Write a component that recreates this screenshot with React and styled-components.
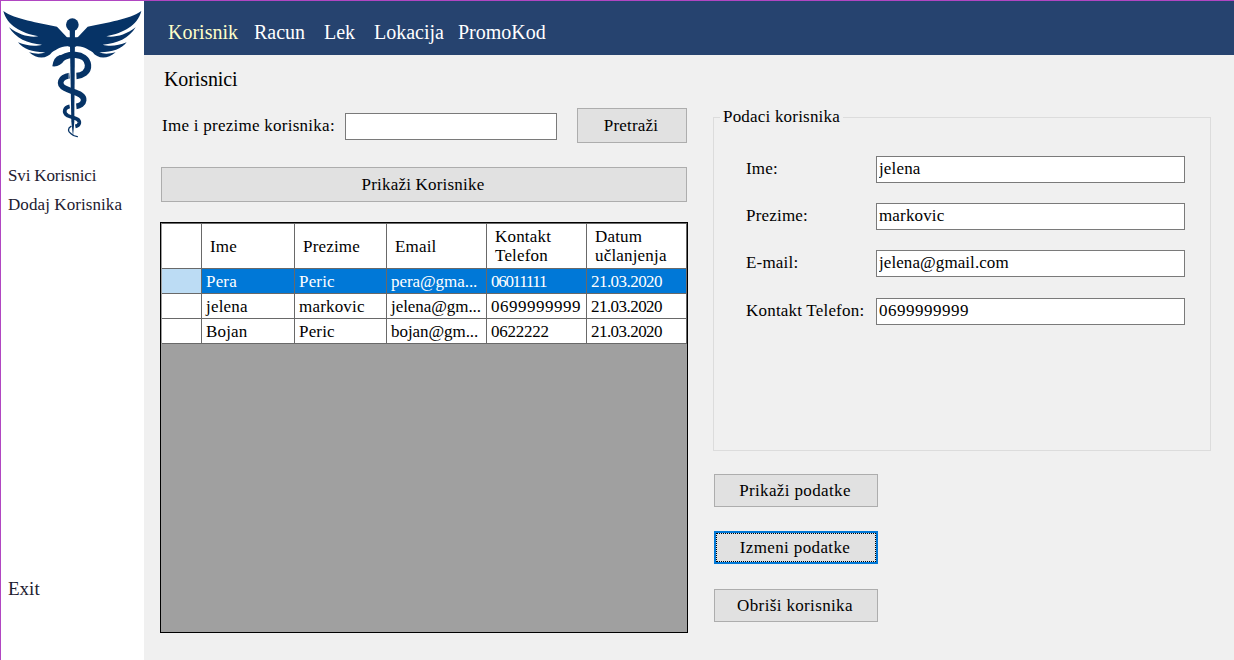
import React from "react";
import styled, { createGlobalStyle, css } from "styled-components";

const GlobalStyle = createGlobalStyle`
  * { box-sizing: border-box; }
  body {
    margin: 0;
    background: #f0f0f0;
    color: #000;
    font: 17px/20px Constantia, "Liberation Serif", serif;
    letter-spacing: 0.2px;
  }
`;

const Window = styled.div`
  display: flex;
  width: 1234px;
  height: 660px;
  overflow: hidden;
  border: solid #b146c2;
  border-width: 1px 0 0 1px;
`;

const Sidebar = styled.aside`
  display: flex;
  flex-direction: column;
  flex: 0 0 143px;
  background: #fff;
  color: #1d2030;
`;

const Logo = styled.svg`
  display: block;
  width: 143px;
  height: 143px;
`;

const SideLink = styled.a`
  display: block;
  margin: 0 0 9px 7px;
  letter-spacing: ${(p) => p.$tracking ?? 0}px;
  white-space: nowrap;
`;

const SideMenu = styled.nav`
  padding-top: 22px;
  flex: 1;
`;

const ExitLink = styled(SideLink)`
  font-size: 19px;
  margin-bottom: 61px;
`;

const Main = styled.div`
  flex: 1;
  display: flex;
  flex-direction: column;
`;

const TopNav = styled.nav`
  display: flex;
  height: 54px;
  padding: 19px 0 0 24px;
  background: #26436f;
  font-size: 20px;
  line-height: 24px;
  letter-spacing: 0;
`;

const NavItem = styled.a`
  width: ${(p) => p.$width}px;
  color: ${(p) => (p.$active ? "#ffffc8" : "#fff")};
`;

const Title = styled.h1`
  margin: 12px 0 0 20px;
  font-size: 20px;
  font-weight: 400;
  line-height: 24px;
  letter-spacing: -0.1px;
`;

const Content = styled.div`
  display: flex;
  align-items: flex-start;
  gap: 25px;
  padding: 17px 23px 0 16px;
`;

const ListPane = styled.section`
  width: 528px;
`;

const SearchRow = styled.div`
  display: flex;
  align-items: flex-start;
  height: 35px;
  padding: 0 1px 0 2px;
`;

const SearchLabel = styled.label`
  width: 183px;
  padding-top: 8px;
  white-space: nowrap;
  letter-spacing: 0.26px;
`;

const TextBox = styled.input`
  width: ${(p) => p.$width}px;
  height: 27px;
  padding: 0 2px 1px;
  border: 1px solid #7a7a7a;
  border-radius: 0;
  outline: 0;
  background: #fff;
  color: #000;
  font: inherit;
  letter-spacing: ${(p) => p.$tracking ?? 0.15}px;
`;

const SearchBox = styled(TextBox)`
  margin-top: 5px;
`;

const Button = styled.button`
  display: block;
  width: ${(p) => p.$width}px;
  height: ${(p) => p.$height}px;
  padding: 0 2px 0 0;
  border: 1px solid #adadad;
  border-radius: 0;
  background: #e1e1e1;
  color: #000;
  font: inherit;
  letter-spacing: inherit;
  ${(p) =>
    p.$focused &&
    css`
      border: 2px solid #0078d7;
      outline: 1px dotted #000;
      outline-offset: -3px;
    `}
`;

const SearchButton = styled(Button)`
  margin-left: 20px;
`;

const ShowAllButton = styled(Button)`
  margin: 24px 0 20px 1px;
`;

const ActionButton = styled(Button)`
  letter-spacing: 0.36px;
`;

const DataGrid = styled.div`
  height: 411px;
  border: 1px solid #000;
  background: #a0a0a0;
`;

const GridRow = styled.div`
  display: grid;
  grid-template-columns: 40px 93px 92px 100px 100px 100px;
  width: 526px;
  height: ${(p) => (p.$header ? 46 : 25)}px;
  border-top: ${(p) => (p.$header ? "1px solid #696969" : "0")};
  border-left: 1px solid #a0a0a0;
`;

const Cell = styled.div`
  display: flex;
  align-items: center;
  padding: ${(p) => (p.$header ? "0 0 0 8px" : "1px 0 0 4px")};
  border: solid #696969;
  border-width: 0 1px 1px 0;
  background: ${(p) => (p.$selected ? "#0078d7" : "#fff")};
  color: ${(p) => (p.$selected ? "#fff" : "#000")};
  line-height: 19px;
  white-space: ${(p) => (p.$header ? "pre-line" : "nowrap")};
  letter-spacing: ${(p) => p.$tracking ?? 0.18}px;
  overflow: hidden;
`;

const RowHeader = styled(Cell)`
  background: ${(p) => (p.$selected ? "#bcdcf4" : "#fff")};
`;

const DetailPane = styled.section`
  width: 498px;
`;

const GroupBox = styled.fieldset`
  height: 343px;
  margin: 0;
  padding: 29px 25px 0 32px;
  border: 1px solid #dcdcdc;
`;

const Legend = styled.legend`
  height: 19px;
  margin-left: -26px;
  padding: 0 3px;
  line-height: 18px;
`;

const Field = styled.div`
  display: flex;
  align-items: flex-start;
  justify-content: space-between;
  margin-bottom: ${(p) => p.$gap}px;
`;

const FieldLabel = styled.label`
  padding-top: 3px;
`;

const Actions = styled.div`
  display: grid;
  grid-template-rows: 57px 58px 33px;
  padding: 23px 0 0 1px;
`;

const navItems = [
  ["Korisnik", 86],
  ["Racun", 70],
  ["Lek", 50],
  ["Lokacija", 84],
  ["PromoKod", 100],
];

const columns = ["Ime", "Prezime", "Email", "Kontakt\nTelefon", "Datum\nučlanjenja"];

const users = [
  { cells: ["Pera", "Peric", "pera@gma...", "06011111", "21.03.2020"], phoneTracking: -1.3 },
  { cells: ["jelena", "markovic", "jelena@gm...", "0699999999", "21.03.2020"], phoneTracking: 0.5 },
  { cells: ["Bojan", "Peric", "bojan@gm...", "0622222", "21.03.2020"], phoneTracking: -0.25 },
];

const trackingFor = (user, col) => [undefined, undefined, -0.06, user.phoneTracking, -0.55][col];

const fields = [
  { label: "Ime:", value: "jelena", gap: 20 },
  { label: "Prezime:", value: "markovic", gap: 20 },
  { label: "E-mail:", value: "jelena@gmail.com", gap: 21, tracking: 0.08 },
  { label: "Kontakt Telefon:", value: "0699999999", gap: 0, tracking: 0.5 },
];

const wing =
  "M10 33 C45 58 115 68 171 80 L205 116 L212 138 C190 137 171 146 156 157 C143 176 112 180 87 157 C105 162 124 163 136 157 C101 158 69 147 54 127 C79 138 107 140 126 134 C83 132 46 114 27 82 C57 106 91 113 115 109 C62 98 22 77 10 33 Z";

function Caduceus() {
  return (
    <Logo viewBox="3 3 429 429" fill="#063366" aria-hidden="true">
      <path d={wing} />
      <path d={wing} transform="translate(434 0) scale(-1 1)" />
      <path d="M190 112 H244 L228 140 H206 Z" />
      <circle cx="217" cy="74" r="19" />
      <path d="M209 85 H225 L223 365 L219 409 L214 365 Z" />
      <g fill="none" stroke="#063366" strokeLinecap="round">
        <path d="M176 182 C195 158 261 156 264 195 C266 217 246 227 229 228" strokeWidth="19" strokeLinecap="butt" />
        <path d="M209 227 C180 231 173 253 195 265 C216 277 254 279 251 301 C250 312 239 318 229 319" strokeWidth="17" strokeLinecap="butt" />
        <path d="M209 319 C193 322 188 338 203 347 C218 354 240 354 238 369 C237 375 231 378 226 379" strokeWidth="11" strokeLinecap="butt" />
        <path d="M213 379 C203 384 203 395 213 401 Q222 409 232 410" strokeWidth="4" />
      </g>
      <path d="M157 199 Q160 172 178 166 L199 166 L193 181 Q180 202 157 199 Z" />
      <g fill="none" stroke="#fff" strokeWidth="3">
        <path d="M227 178 V251" />
        <path d="M207 253 V180" strokeWidth="2" />
        <path d="M226 295 V338" />
      </g>
    </Logo>
  );
}

export default function App() {
  return (
    <>
      <GlobalStyle />
      <Window>
        <Sidebar>
          <Caduceus />
          <SideMenu>
            <SideLink $tracking={-0.15}>Svi Korisnici</SideLink>
            <SideLink $tracking={0.08}>Dodaj Korisnika</SideLink>
          </SideMenu>
          <ExitLink>Exit</ExitLink>
        </Sidebar>
        <Main>
          <TopNav>
            {navItems.map(([name, width], i) => (
              <NavItem key={name} $width={width} $active={i === 0}>
                {name}
              </NavItem>
            ))}
          </TopNav>
          <Title>Korisnici</Title>
          <Content>
            <ListPane>
              <SearchRow>
                <SearchLabel>Ime i prezime korisnika:</SearchLabel>
                <SearchBox $width={212} />
                <SearchButton $width={110} $height={35}>Pretraži</SearchButton>
              </SearchRow>
              <ShowAllButton $width={526} $height={35}>Prikaži Korisnike</ShowAllButton>
              <DataGrid>
                <GridRow $header>
                  <RowHeader />
                  {columns.map((name) => (
                    <Cell key={name} $header>{name}</Cell>
                  ))}
                </GridRow>
                {users.map((user, row) => (
                  <GridRow key={user.cells[0]}>
                    <RowHeader $selected={row === 0} />
                    {user.cells.map((value, col) => (
                      <Cell key={col} $selected={row === 0} $tracking={trackingFor(user, col)}>
                        {value}
                      </Cell>
                    ))}
                  </GridRow>
                ))}
              </DataGrid>
            </ListPane>
            <DetailPane>
              <GroupBox>
                <Legend>Podaci korisnika</Legend>
                {fields.map((field) => (
                  <Field key={field.label} $gap={field.gap}>
                    <FieldLabel>{field.label}</FieldLabel>
                    <TextBox $width={309} $tracking={field.tracking} defaultValue={field.value} />
                  </Field>
                ))}
              </GroupBox>
              <Actions>
                <ActionButton $width={164} $height={33}>Prikaži podatke</ActionButton>
                <ActionButton $width={164} $height={33} $focused>Izmeni podatke</ActionButton>
                <ActionButton $width={164} $height={33}>Obriši korisnika</ActionButton>
              </Actions>
            </DetailPane>
          </Content>
        </Main>
      </Window>
    </>
  );
}
